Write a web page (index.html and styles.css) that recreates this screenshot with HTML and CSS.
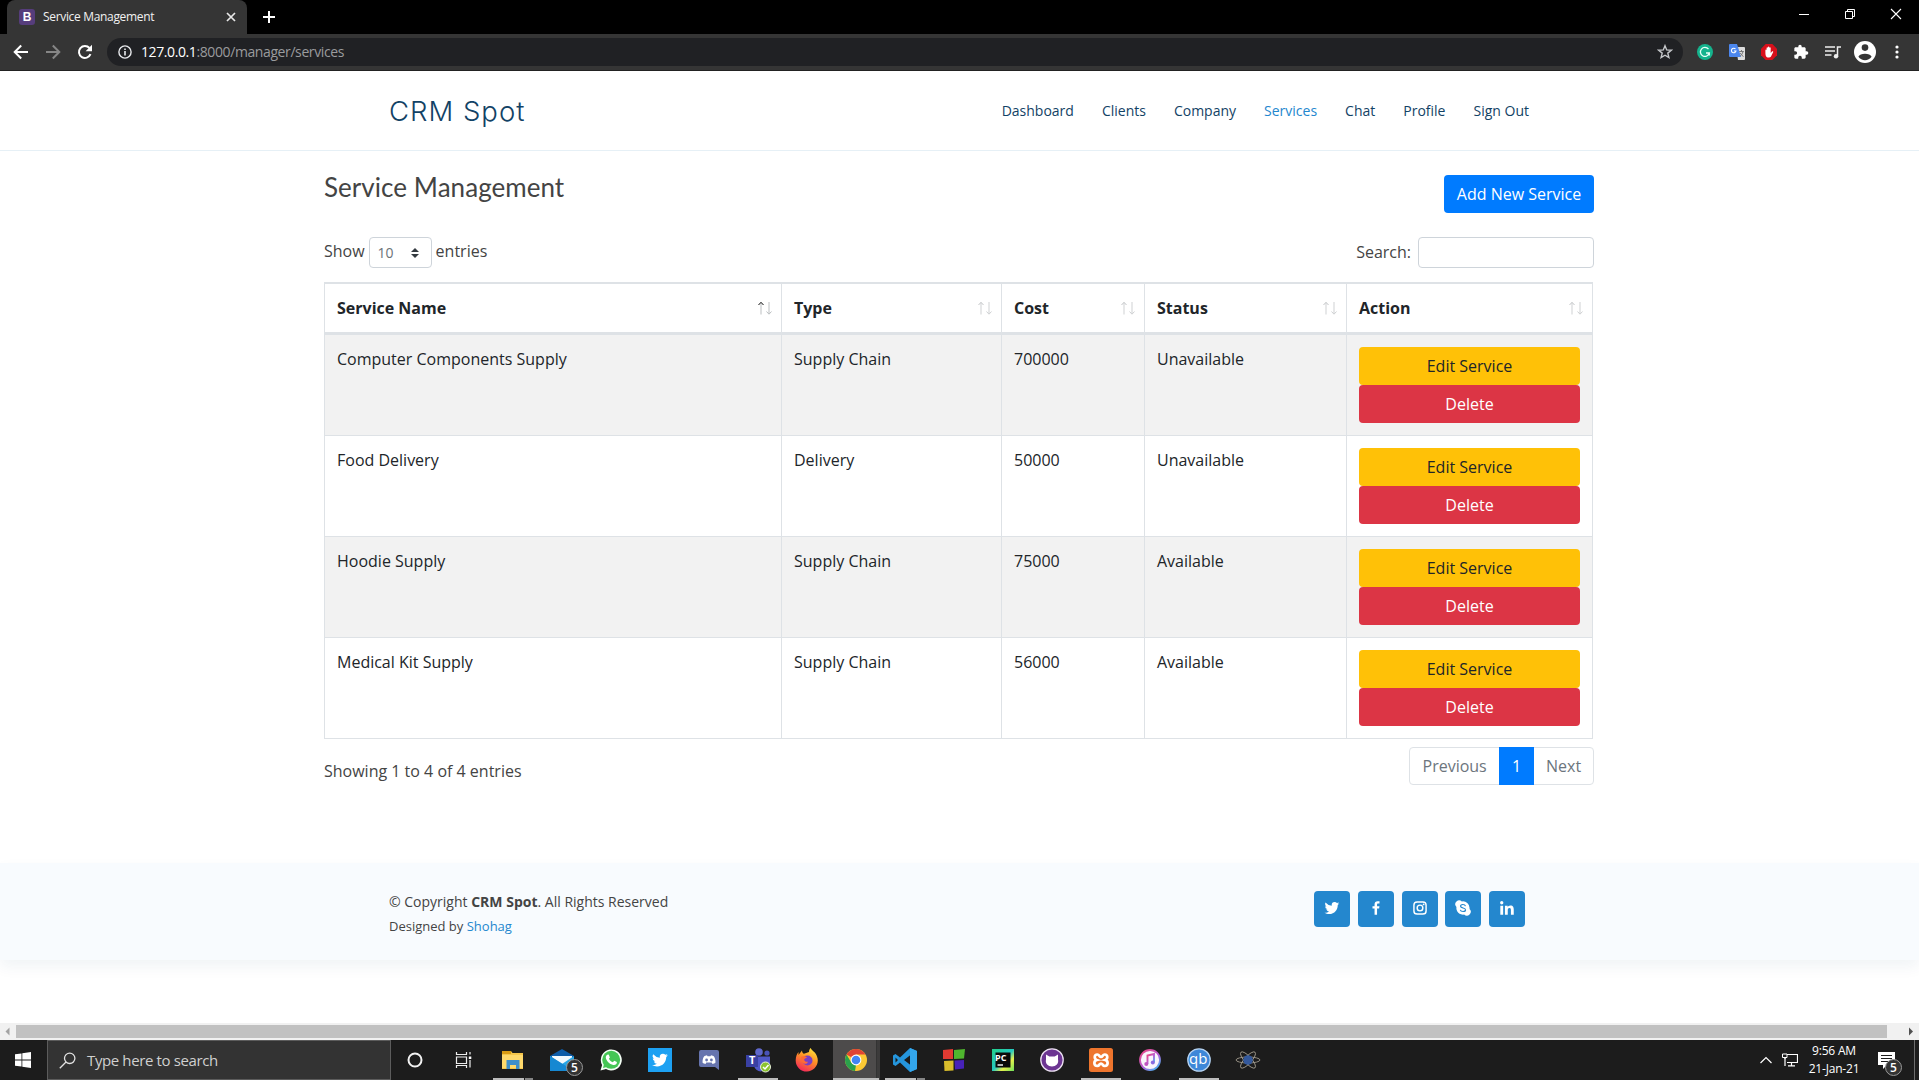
FILE: index.html
```html
<!DOCTYPE html>
<html lang="en">
<head>
<meta charset="utf-8">
<title>Service Management</title>
<link rel="stylesheet" href="styles.css">
</head>
<body>
<svg class="sprite" width="0" height="0">
  <symbol id="sort" viewBox="0 0 16 16"><path d="M4 14.500V2.500M12 2v12M9.500 11.500L12 14.200 14.500 11.500"/><path class="head" d="M1.500 5L4 2.300 6.500 5"/></symbol>
</svg>

<div class="tabstrip">
  <div class="tab">
    <span class="favicon">B</span>
    <span class="tab-title">Service Management</span>
    <svg class="tab-close" width="10" height="10" viewBox="0 0 10 10"><path d="M1 1l8 8M9 1L1 9" stroke="#e8e8e8" stroke-width="1.700"/></svg>
  </div>
  <svg class="newtab" width="14" height="14" viewBox="0 0 14 14"><path d="M7 1v12M1 7h12" stroke="#fff" stroke-width="2"/></svg>
  <div class="window-controls">
    <svg width="46" height="28" viewBox="0 0 46 28"><path d="M18 14.500h10" stroke="#fff"/></svg>
    <svg width="46" height="28" viewBox="0 0 46 28"><path d="M18.500 11.500h7v7h-7zM20.500 11.500v-2h7v7h-2" fill="none" stroke="#fff"/></svg>
    <svg width="46" height="28" viewBox="0 0 46 28"><path d="M18 9l10 10M28 9L18 19" stroke="#fff" stroke-width="1.100"/></svg>
  </div>
</div>

<div class="toolbar">
  <svg width="16" height="16" viewBox="0 0 16 16"><path d="M15 8H2M8.200 1.500L1.700 8l6.500 6.500" fill="none" stroke="#fff" stroke-width="2"/></svg>
  <svg width="16" height="16" viewBox="0 0 16 16"><path d="M1 8h13M7.800 1.500L14.300 8l-6.500 6.500" fill="none" stroke="#868686" stroke-width="2"/></svg>
  <svg width="16" height="16" viewBox="0 0 16 16"><path d="M13.500 10.200A6 6 0 1 1 12.500 4" fill="none" stroke="#fff" stroke-width="2"/><path d="M15 .800v6.400H8.600z" fill="#fff"/></svg>
  <div class="omnibox">
    <svg width="14" height="14" viewBox="0 0 14 14"><circle cx="7" cy="7" r="6.100" fill="none" stroke="#e8eaed" stroke-width="1.400"/><path d="M7 6v4.500M7 3.400v1.600" stroke="#e8eaed" stroke-width="1.600"/></svg>
    <span class="url"><b>127.0.0.1</b><i>:8000/manager/services</i></span>
    <svg class="star" width="16" height="16" viewBox="0 0 16 16"><path d="M8 1.700l1.700 4.200 4.600.300-3.500 2.900 1.100 4.500L8 11.200l-3.900 2.400 1.100-4.500L1.700 6.200l4.600-.3z" fill="none" stroke="#c6c8cb" stroke-width="1.400"/></svg>
  </div>
  <div class="extensions">
    <svg width="16" height="16" viewBox="0 0 16 16"><circle cx="8" cy="8" r="8" fill="#15b38d"/><path d="M11.500 5.200A4.500 4.500 0 1 0 12.300 9H9M12.300 9v2.500" fill="none" stroke="#e8fff8" stroke-width="1.300"/></svg>
    <svg width="16" height="16" viewBox="0 0 16 16"><path d="M7 3h8a1 1 0 0 1 1 1v11a1 1 0 0 1-1 1H9z" fill="#dcdcdc"/><path d="M1 0h7l4 13H1a1 1 0 0 1-1-1V1a1 1 0 0 1 1-1z" fill="#4c87ee"/><path d="M6.500 5A2.300 2.300 0 1 0 7 7H4.900" fill="none" stroke="#fff" stroke-width="1.100"/><path d="M10.200 7.500h4.600M12.500 6v1.500M14 7.500c-.4 2.400-2 4-3 4.700M11.200 9l3.200 3.800" fill="none" stroke="#777"/></svg>
    <svg width="16" height="16" viewBox="0 0 16 16"><path d="M4.700 0h6.600L16 4.700v6.600L11.300 16H4.700L0 11.300V4.700z" fill="#d8101b"/><path d="M4.400 6.200c0-1 1.200-1 1.200 0V4c0-1 1.300-1 1.300 0v-.7c0-1.100 1.400-1.100 1.400 0V4c0-1 1.400-1 1.400 0v5l1.300-1.500c.6-.6 1.600 0 1.100.8L10 12.500c-1 1.400-4.300 1.500-5-.3-.7-1.500-.6-4-.6-6z" fill="#fff"/></svg>
    <svg width="16" height="16" viewBox="0 0 24 24"><path d="M20.500 11H19V7c0-1.100-.9-2-2-2h-4V3.500a2.500 2.500 0 0 0-5 0V5H4c-1.100 0-2 .9-2 2v3.800h1.500a2.700 2.700 0 0 1 0 5.400H2V20c0 1.100.9 2 2 2h3.800v-1.500a2.700 2.700 0 0 1 5.400 0V22H17c1.100 0 2-.9 2-2v-4h1.500a2.500 2.500 0 0 0 0-5z" fill="#fff"/></svg>
    <svg width="16" height="16" viewBox="0 0 16 16"><path d="M0 3h10M0 7h10M0 11h6.500M12.500 12.500V3H16" fill="none" stroke="#eee" stroke-width="1.500"/><circle cx="11" cy="12.200" r="2.200" fill="#eee"/></svg>
  </div>
  <svg class="avatar" width="22" height="22" viewBox="0 0 22 22"><circle cx="11" cy="11" r="11" fill="#fff"/><circle cx="11" cy="6.600" r="3.300" fill="#353535"/><path d="M4.400 15.800c1.200-4.200 12-4.200 13.200 0-3.200 4.600-10 4.600-13.200 0z" fill="#353535"/></svg>
  <svg width="4" height="14" viewBox="0 0 4 14"><g fill="#fff"><circle cx="2" cy="2" r="1.600"/><circle cx="2" cy="7" r="1.600"/><circle cx="2" cy="12" r="1.600"/></g></svg>
</div>

<header class="site-header">
  <div class="brand">CRM Spot</div>
  <nav class="nav">
    <a>Dashboard</a><a>Clients</a><a>Company</a><a class="active">Services</a><a>Chat</a><a>Profile</a><a>Sign Out</a>
  </nav>
</header>

<main class="content">
  <div class="title-row">
    <h4>Service Management</h4>
    <a class="btn btn-primary">Add New Service</a>
  </div>
  <div class="filter-row">
    <div class="length">Show <span class="select">10 <svg width="8" height="10" viewBox="0 0 4 5"><path d="M2 0L0 2h4zm0 5L0 3h4z" fill="#343a40"/></svg></span> entries</div>
    <div class="search">Search:<span class="input"></span></div>
  </div>
  <table class="services">
    <colgroup><col class="c-name"><col class="c-type"><col class="c-cost"><col class="c-status"><col class="c-action"></colgroup>
    <thead>
      <tr>
        <th><div class="th">Service Name<svg class="sort asc"><use href="#sort"/></svg></div></th>
        <th><div class="th">Type<svg class="sort"><use href="#sort"/></svg></div></th>
        <th><div class="th">Cost<svg class="sort"><use href="#sort"/></svg></div></th>
        <th><div class="th">Status<svg class="sort"><use href="#sort"/></svg></div></th>
        <th><div class="th">Action<svg class="sort"><use href="#sort"/></svg></div></th>
      </tr>
    </thead>
    <tbody>
      <tr><td>Computer Components Supply</td><td>Supply Chain</td><td>700000</td><td>Unavailable</td><td><a class="btn btn-warning">Edit Service</a><a class="btn btn-danger">Delete</a></td></tr>
      <tr><td>Food Delivery</td><td>Delivery</td><td>50000</td><td>Unavailable</td><td><a class="btn btn-warning">Edit Service</a><a class="btn btn-danger">Delete</a></td></tr>
      <tr><td>Hoodie Supply</td><td>Supply Chain</td><td>75000</td><td>Available</td><td><a class="btn btn-warning">Edit Service</a><a class="btn btn-danger">Delete</a></td></tr>
      <tr><td>Medical Kit Supply</td><td>Supply Chain</td><td>56000</td><td>Available</td><td><a class="btn btn-warning">Edit Service</a><a class="btn btn-danger">Delete</a></td></tr>
    </tbody>
  </table>
  <div class="table-foot">
    <div class="info">Showing 1 to 4 of 4 entries</div>
    <div class="pagination"><span class="prev">Previous</span><span class="current">1</span><span class="next">Next</span></div>
  </div>
</main>

<footer class="site-footer">
  <div class="legal">
    <div class="copyright">© Copyright <strong>CRM Spot</strong>. All Rights Reserved</div>
    <div class="credits">Designed by <a>Shohag</a></div>
  </div>
  <div class="social">
    <a><svg width="18" height="18" viewBox="0 0 24 24"><path d="M19.630 7.997c.013.175.013.349.013.523 0 5.325-4.053 11.461-11.460 11.461-2.282 0-4.402-.661-6.186-1.809.324.037.636.050.973.050 1.883 0 3.616-.636 5.001-1.721a4.036 4.036 0 0 1-3.767-2.793c.249.037.499.062.761.062.361 0 .724-.050 1.061-.137a4.027 4.027 0 0 1-3.230-3.953v-.050c.537.299 1.160.486 1.820.511a4.022 4.022 0 0 1-1.796-3.354c0-.748.199-1.434.548-2.032a11.457 11.457 0 0 0 8.306 4.215c-.062-.300-.100-.611-.100-.923a4.026 4.026 0 0 1 4.028-4.028c1.160 0 2.207.486 2.943 1.272a7.957 7.957 0 0 0 2.556-.973 4.020 4.020 0 0 1-1.771 2.220 8.073 8.073 0 0 0 2.319-.624 8.645 8.645 0 0 1-2.019 2.083z"/></svg></a>
    <a><svg width="18" height="18" viewBox="0 0 24 24"><path d="M13.397 20.997v-8.196h2.765l.411-3.209h-3.176V7.548c0-.926.258-1.560 1.587-1.560h1.684V3.127A22.336 22.336 0 0 0 14.201 3c-2.444 0-4.122 1.492-4.122 4.231v2.355H7.332v3.209h2.753v8.202z"/></svg></a>
    <a><svg width="18" height="18" viewBox="0 0 24 24"><rect x="3.900" y="3.900" width="16.200" height="16.200" rx="4.200" fill="none" stroke="#fff" stroke-width="1.900"/><circle cx="12" cy="12" r="3.800" fill="none" stroke="#fff" stroke-width="1.900"/><circle cx="16.800" cy="7.200" r="1.200"/></svg></a>
    <a><svg width="18" height="18" viewBox="0 0 24 24"><path d="M20.700 13.400c.1-.5.100-.9.100-1.400A8.800 8.800 0 0 0 10.500 3.300 5 5 0 0 0 3.300 10.500 8.800 8.800 0 0 0 13.500 20.700a5 5 0 0 0 7.200-7.300z"/><path d="M15.300 9.400c-.8-2.800-6.700-2.700-6.600.1.100 3.200 6.800 1.900 6.700 5-.1 2.900-6.300 3-7-.1" fill="none" stroke="#2487ce" stroke-width="1.500"/></svg></a>
    <a><svg width="18" height="18" viewBox="0 0 24 24"><circle cx="4.983" cy="5.009" r="2.188"/><path d="M9.237 8.855v12.139h3.769v-6.003c0-1.584.298-3.118 2.262-3.118 1.937 0 1.961 1.811 1.961 3.218v5.904H21v-6.657c0-3.270-.704-5.783-4.526-5.783-1.835 0-3.065 1.007-3.568 1.960h-.051v-1.660zm-6.142 0H6.870v12.139H3.095z"/></svg></a>
  </div>
</footer>

<div class="hscroll">
  <svg width="16" height="17" viewBox="0 0 16 17"><path d="M9.500 4.500v8l-4-4z" fill="#a3a3a3"/></svg>
  <div class="thumb"></div>
  <svg width="32" height="17" viewBox="0 0 32 17"><path d="M22 4.500v8l4-4z" fill="#505050"/></svg>
</div>

<div class="taskbar">
  <div class="start"><svg width="16" height="16" viewBox="0 0 16 16"><path d="M0 2.300L6.500 1.400V7.600H0zM7.300 1.300L16 0v7.600H7.300zM0 8.400h6.500v6.200L0 13.700zM7.300 8.400H16V16l-8.700-1.300z" fill="#fff"/></svg></div>
  <div class="searchbox"><svg width="17" height="17" viewBox="0 0 17 17"><circle cx="10.700" cy="6.300" r="5.200" fill="none" stroke="#e2e2e2" stroke-width="1.300"/><path d="M7 10L.8 16.200" stroke="#e2e2e2" stroke-width="1.300"/></svg><span>Type here to search</span></div>
  <div class="apps">
    <div class="app"><svg width="24" height="24" viewBox="0 0 24 24"><circle cx="12" cy="12" r="6.500" fill="none" stroke="#f2f2f2" stroke-width="2"/></svg></div>
    <div class="app"><svg width="24" height="24" viewBox="0 0 24 24"><path d="M4.500 4v2.500h10V4M4.500 9h10v6.500h-10zM4.500 20v-2.500h10V20M18 4v2.500M18 12v7.500" fill="none" stroke="#eee" stroke-width="1.200"/><path d="M16.800 8.500h2.500V11h-2.500z" fill="#fff"/></svg></div>
    <div class="app grouped"><svg width="24" height="24" viewBox="0 0 24 24"><path d="M1 3h9l1.500 2H22v16H1z" fill="#f5c64b"/><path d="M1 3h9v3H1z" fill="#d99b14"/><path d="M1 7h21v13H1z" fill="#ffd96c"/><path d="M5.500 12h13v9h-3.500v-4h-6v4H5.500z" fill="#3f8fca"/></svg></div>
    <div class="app"><svg width="26" height="24" viewBox="0 0 26 24"><path d="M1 8L13 1l12 7v5H1z" fill="#0e5ca8"/><path d="M3 8h20v8H3z" fill="#f3f9fd"/><path d="M1 8l12 8 12-8v15H1z" fill="#28a5e5"/><path d="M1 8l24 15H1z" fill="#1688d2"/></svg><span class="badge">5</span></div>
    <div class="app"><svg width="24" height="24" viewBox="0 0 24 24"><path d="M1.500 22.500l1.600-5.500A10.500 10.500 0 1 1 7 21z" fill="#f5fff6"/><circle cx="12.200" cy="11.800" r="9" fill="#45c655"/><path d="M4 20l1-4 3 3z" fill="#45c655"/><path d="M8.200 6.800l1.500-.2 1.200 2.800-1 1.300c1 1.800 2.200 2.800 4 3.600l1.300-1.500 2.700 1.300c.2 2-1.600 3.200-3.600 2.900-4-.9-6.900-4.200-7.500-7.300-.1-1.200.6-2.300 1.400-2.900z" fill="#fff"/></svg></div>
    <div class="app"><svg width="24" height="24" viewBox="0 0 24 24"><path d="M0 0h24v24H0z" fill="#1da1f2"/><path transform="translate(2.500 2.500) scale(.8)" fill="#fff" d="M19.630 7.997c.013.175.013.349.013.523 0 5.325-4.053 11.461-11.460 11.461-2.282 0-4.402-.661-6.186-1.809 2.200.2 4.300-.3 5.974-1.671a4.036 4.036 0 0 1-3.767-2.793c.6.100 1.200.050 1.822-.075a4.027 4.027 0 0 1-3.230-4.003c.537.299 1.160.486 1.820.511a4.022 4.022 0 0 1-1.248-5.386 11.457 11.457 0 0 0 8.306 4.215c-.7-2.900 1.400-4.951 3.928-4.951 1.160 0 2.207.486 2.943 1.272a7.957 7.957 0 0 0 2.556-.973 4.020 4.020 0 0 1-1.771 2.220 8.073 8.073 0 0 0 2.319-.624 8.645 8.645 0 0 1-2.019 2.083z"/></svg></div>
    <div class="app"><svg width="24" height="24" viewBox="0 0 24 24"><path d="M4 2h16a2 2 0 0 1 2 2v18l-4-3H4a2 2 0 0 1-2-2V4a2 2 0 0 1 2-2z" fill="#6674ae"/><path d="M5.500 14.500c0-3 .8-5.500 2-6.500l2.500-.8.500 1h3l.5-1 2.500.8c1.200 1 2 3.500 2 6.500-1 1-2 1.400-3 1.400l-.8-1.400H9.300l-.8 1.400c-1 0-2-.4-3-1.400z" fill="#fff"/><circle cx="9.600" cy="12" r="1.400" fill="#6674ae"/><circle cx="14.400" cy="12" r="1.400" fill="#6674ae"/></svg></div>
    <div class="app open"><svg width="26" height="26" viewBox="0 0 26 26"><circle cx="14" cy="5" r="3.800" fill="#6068cc"/><circle cx="22" cy="6" r="2.600" fill="#4953b8"/><path d="M9 9.500h16v7a5 5 0 0 1-5 5l-4 3a7 7 0 0 1-7-6z" fill="#5059c9"/><path d="M1 8h12v12H1z" fill="#3940a3"/><circle cx="20.500" cy="20" r="5" fill="#8cc32f" stroke="#e9f3dc"/><path d="M18 20l2 2 3.500-4" fill="none" stroke="#fff" stroke-width="1.500"/></svg><b class="teams">T</b></div>
    <div class="app"><svg width="24" height="24" viewBox="0 0 24 24"><defs><linearGradient id="ff" x1=".8" y1="0" x2=".3" y2="1"><stop offset="0" stop-color="#ffe83d"/><stop offset=".45" stop-color="#ff9226"/><stop offset="1" stop-color="#f3265a"/></linearGradient></defs><path d="M14 4c0-2 1-3.500 1.700-4 1 3 5.300 4 6.300 8.500C25 16 19 23.500 12 23.500S.5 18 .7 12C.8 8.500 2 5.500 3.500 4v3L7 2.500c0 2 1 3 2 3.200z" fill="url(#ff)"/><circle cx="12.500" cy="12.500" r="5" fill="#7a3fc4"/><path d="M6 9c2-1.500 5-.5 6 .2-1 1.300-3 1-2.700 3 .3 1 1.500 2 3.700 1.500-2 4.500-8 1.500-7-4.700z" fill="#ff6a35"/></svg></div>
    <div class="app focused"><svg width="24" height="24" viewBox="0 0 24 24"><circle cx="12" cy="12" r="11" fill="#fcc934"/><path d="M12 12L2.500 6.500A11 11 0 0 1 21.500 6.500H12z" fill="#e04434"/><path d="M2.500 6.500l5 8.500 4.500 2-1 6A11 11 0 0 1 2.500 6.500z" fill="#2aa14c"/><circle cx="12" cy="12" r="5.400" fill="#fff"/><circle cx="12" cy="12" r="4.300" fill="#4285f4"/></svg></div>
    <div class="app grouped"><svg width="24" height="24" viewBox="0 0 24 24"><path d="M17 0l7 3v18l-7 3L7 14.500 2.500 18 0 16.500V7.500L2.500 6 7 9.500zM17.500 7L11 12l6.500 5zM2.500 9.500v5L5 12z" fill="#2596dd" fill-rule="evenodd"/><path d="M17 0l7 3v18l-7 3z" fill="#33a7ee"/></svg></div>
    <div class="app"><svg width="24" height="24" viewBox="0 0 24 24"><path d="M1 2l10-1v10H1z" fill="#e03a32"/><path d="M12 2l11-1-1 9.500-10 .5z" fill="#4fb62e"/><path d="M2 13l9.500-.5v10L2.500 23z" fill="#d9bd2c"/><path d="M12.500 12.500L22 12v8.500l-9 1z" fill="#4722b8"/></svg></div>
    <div class="app"><svg width="22" height="22" viewBox="0 0 22 22"><defs><linearGradient id="pc" x2="1" y2="1"><stop offset="0" stop-color="#22d08a"/><stop offset=".5" stop-color="#27c8c0"/><stop offset=".7" stop-color="#e8f04c"/><stop offset="1" stop-color="#6de05a"/></linearGradient></defs><path d="M0 0h22v22H0z" fill="url(#pc)"/><path d="M3.500 3.500h15v15h-15z" fill="#0a0a0a"/><path d="M5.500 16h5.500" stroke="#fff" stroke-width="1.400"/></svg><b class="pycharm">PC</b></div>
    <div class="app"><svg width="24" height="24" viewBox="0 0 24 24"><circle cx="12" cy="12" r="11.200" fill="#6c3592" stroke="#eadff0" stroke-width="1.300"/><path d="M6 6.500l3.300 2h5.400l3.300-2v5c1 4-2 7-6 7s-7-3-6-7z" fill="#fff"/></svg></div>
    <div class="app open"><svg width="24" height="24" viewBox="0 0 24 24"><rect width="24" height="24" rx="2.500" fill="#ee752d"/><path d="M8.300 6.500c-3.300 0-3.300 4.600-.6 5.500-3.200.8-3.200 6 .6 6 2.200 0 2-2.500 3.700-2.500s1.500 2.500 3.700 2.500c3.800 0 3.800-5.200.6-6 2.700-.9 2.700-5.500-.6-5.500-2.200 0-2 2.500-3.700 2.500s-1.500-2.500-3.700-2.500z" fill="none" stroke="#fff" stroke-width="2.700"/></svg></div>
    <div class="app"><svg width="24" height="24" viewBox="0 0 24 24"><defs><linearGradient id="it" x2=".8" y2="1"><stop offset="0" stop-color="#f0457c"/><stop offset=".6" stop-color="#b45fd8"/><stop offset="1" stop-color="#4bb4f0"/></linearGradient></defs><circle cx="12" cy="12" r="10" fill="#f8f5fb" stroke="url(#it)" stroke-width="1.800"/><path d="M9.500 16V7.500l6.500-1.500v8.500" fill="none" stroke="url(#it)" stroke-width="1.900"/><circle cx="8.300" cy="16" r="2" fill="#c054c0"/><circle cx="14.800" cy="14.600" r="2" fill="#8a6be0"/></svg></div>
    <div class="app open"><svg width="24" height="24" viewBox="0 0 24 24"><circle cx="12" cy="12" r="11.200" fill="#3d87d8" stroke="#b5d2f0" stroke-width="1.300"/></svg><b class="qb">qb</b></div>
    <div class="app"><svg width="26" height="24" viewBox="0 0 26 24"><g fill="none" stroke="#a09a8c" stroke-width=".9"><ellipse cx="13" cy="12" rx="12" ry="3"/><ellipse cx="13" cy="12" rx="10.500" ry="3.500" transform="rotate(48 13 12)"/><ellipse cx="13" cy="12" rx="10.500" ry="3.500" transform="rotate(-48 13 12)"/></g><circle cx="13" cy="12" r="4.800" fill="#34599c"/></svg></div>
  </div>
  <div class="tray">
    <svg width="12" height="8" viewBox="0 0 12 8"><path d="M.5 7L6 1.500 11.500 7" fill="none" stroke="#fff" stroke-width="1.200"/></svg>
    <svg class="net" width="16" height="14" viewBox="0 0 16 14"><path d="M5 1.500h10.500v8H5M3 5v8M9.500 9.500v3M6 12.900h7M2 5h2" fill="none" stroke="#fff" stroke-width="1.200"/><path d="M.5 1h4.500v3.500H.5z" fill="none" stroke="#fff"/></svg>
    <div class="clock"><span>9:56 AM</span><span>21-Jan-21</span></div>
    <div class="action-center"><svg width="17" height="17" viewBox="0 0 17 17"><path d="M0 0h17v13H9l-4 4v-4H0z" fill="#fff"/><path d="M3 3.500h11M3 6.500h11M3 9.500h7" stroke="#1c1c1c"/></svg><span class="badge">5</span></div>
    <div class="peek"></div>
  </div>
</div>
</body>
</html>
```
FILE: styles.css
```css
* { box-sizing: border-box; }
body {
  margin: 0;
  width: 1919px;
  height: 1080px;
  overflow: hidden;
  display: flex;
  flex-direction: column;
  background: #fff;
  color: #444;
  font: 16px/24px "Open Sans", sans-serif;
}
svg { flex: none; display: block; }
.sprite { position: absolute; }

/* browser chrome */
.tabstrip { height: 34px; background: #000; display: flex; align-items: center; padding-left: 7px; flex: none; }
.tab {
  width: 240px; height: 34px; background: #353535; border-radius: 8px 8px 0 0;
  display: flex; align-items: center; padding: 0 11px 0 12px; color: #f1f1f1;
}
.favicon {
  width: 16px; height: 16px; border-radius: 3px; background: #563d7c; color: #fff;
  font: bold 12px/16px "Liberation Sans", sans-serif; text-align: center; margin-right: 8px;
}
.tab-title { font-size: 12px; letter-spacing: -.33px; flex: 1; white-space: nowrap; }
.newtab { margin-left: 15px; }
.window-controls { display: flex; margin-left: auto; align-self: flex-start; }
.toolbar {
  height: 37px; background: #353535; border-bottom: 1px solid #222; flex: none;
  display: flex; align-items: center; gap: 16px; padding: 0 20px 0 13px;
}
.omnibox {
  flex: 1; height: 28px; border-radius: 14px; background: #202124; margin: 0 -2px;
  display: flex; align-items: center; padding: 0 10px 0 11px;
}
.url { font-size: 14px; margin-left: 9px; flex: 1; color: #9a9b9d; letter-spacing: -.4px; }
.url b { font-weight: 400; color: #fff; }
.url i { font-style: normal; }
.extensions { display: flex; gap: 16px; }
.avatar { margin-left: -3px; margin-right: 3px; }

/* site header */
.site-header {
  height: 80px; border-bottom: 1px solid #e6f0f6; flex: none; padding: 0 390px 0 389px;
  display: flex; justify-content: space-between; align-items: center;
}
.brand { font: 300 27.5px/40px Inter, sans-serif; letter-spacing: 1px; color: #124265; }
.nav { display: flex; gap: 28px; font-size: 14px; color: #124265; }
.nav a.active { color: #2487ce; }

/* content */
.content { width: 1270px; margin: 24px 0 0 324px; flex: none; height: 688px; }
.title-row { display: flex; justify-content: space-between; height: 62px; }
h4 { margin: -2px 0 0; font: 400 26px/29px Lato, sans-serif; letter-spacing: .05px; color: #444; }
.btn {
  display: block; height: 38px; padding: 7px 12px; border-radius: 4px;
  text-align: center; color: #fff;
}
.btn-primary { background: #007bff; width: 150px; padding: 7px 0; }
.btn-warning { background: #ffc107; color: #212529; }
.btn-danger { background: #dc3545; }
.filter-row { display: flex; justify-content: space-between; height: 45px; }
.length { display: flex; height: 31px; line-height: 28px; gap: 4px; }
.select {
  width: 63px; height: 31px; border: 1px solid #ced4da; border-radius: 4px; color: #6b7278;
  font-size: 14px; line-height: 30px; display: flex; align-items: center;
  justify-content: space-between; padding: 0 12px 0 8px;
}
.search { display: flex; line-height: 30px; gap: 7px; }
.input { width: 176px; height: 31px; border: 1px solid #ced4da; border-radius: 4px; }

.services {
  width: 1269px; table-layout: fixed; border-collapse: separate; border-spacing: 0;
  border-left: 1px solid #dee2e6; color: #212529;
}
.c-name { width: 457px; } .c-type { width: 220px; } .c-cost { width: 143px; }
.c-status { width: 202px; } .c-action { width: 246px; }
th, td { padding: 12px; text-align: left; vertical-align: top; border-right: 1px solid #dee2e6; }
th { border-top: 2px solid #dee2e6; border-bottom: 3px solid #dee2e6; font-weight: 700; }
td { border-bottom: 1px solid #dee2e6; }
tbody tr:nth-child(odd) { background: #f2f2f2; }
.th { display: flex; justify-content: space-between; align-items: center; height: 24px; margin-right: -4px; }
.sort { width: 16px; height: 16px; fill: none; stroke: #cfd1d3; --head: #c4c6c8; }
.sort.asc { --head: #111; stroke: #bcbfc1; }
.head { stroke: var(--head); }
.table-foot { display: flex; justify-content: space-between; padding-top: 8px; }
.info { padding-top: 12px; }
.pagination {
  display: flex; height: 38px; line-height: 36px; border: 1px solid #dee2e6;
  border-radius: 4px; color: #6c757d;
}
.prev { width: 89px; padding-left: 12.5px; }
.current { width: 35px; margin: -1px 0; line-height: 38px; text-align: center; background: #007bff; color: #fff; }
.next { width: 59px; padding-left: 12px; }

/* footer */
.site-footer {
  height: 97px; background: #f8fbfe; box-shadow: 0 7px 14px rgba(18, 66, 101, .06); flex: none;
  padding: 28px 394px 0 389px; display: flex; justify-content: space-between;
}
.copyright { font-size: 14px; line-height: 22px; }
.credits { font-size: 13px; line-height: 20px; padding-top: 3px; }
.credits a { color: #2487ce; }
.social { display: flex; gap: 7.7px; }
.social a { width: 36px; height: 36px; border-radius: 4px; background: #2487ce; padding: 8px 9px; fill: #fff; }

/* scrollbar and taskbar */
.hscroll { height: 17px; background: #f1f1f1; display: flex; margin-top: auto; flex: none; }
.thumb { flex: 1; margin: 2px 0; background: #c1c1c1; }
.taskbar { height: 40px; background: #1c1c1c; display: flex; flex: none; color: #fff; }
.start { width: 47px; display: flex; align-items: center; justify-content: center; padding-right: 1px; }
.searchbox {
  width: 344px; background: #333; border: 1px solid #5c5c5c; display: flex; align-items: center;
  gap: 11px; padding-left: 11px; font-size: 15px; color: #d0d0d0; letter-spacing: -.4px;
}
.searchbox span { letter-spacing: -.38px; }
.apps { display: flex; margin-left: -1px; }
.app { width: 49px; height: 40px; display: flex; align-items: center; justify-content: center; position: relative; }
.app.open { background: linear-gradient(#bdbdbd, #bdbdbd) 5px 38px / 40px 2px no-repeat; }
.app.grouped { background: linear-gradient(90deg, #bdbdbd 31px, #1c1c1c 31px, #1c1c1c 32px, #858585 32px) 5px 38px / 40px 2px no-repeat; }
.app.focused { background: linear-gradient(#bdbdbd, #bdbdbd) 2px 38px / 46px 2px no-repeat, linear-gradient(90deg, #1c1c1c 2px, #4d4b4b 2px, #4d4b4b 45px, #333 45px, #333 46px, #3c3b3b 46px); }
.badge {
  position: absolute; left: 29px; top: 19px; width: 17px; height: 17px; border-radius: 50%;
  background: #333; border: 1px solid #999; font-size: 12px; font-weight: 600; line-height: 15px; text-align: center;
}
.teams { position: absolute; left: 16px; top: 8px; font-size: 11px; }
.pycharm { position: absolute; left: 17px; top: 10px; font-size: 9px; line-height: 15px; }
.qb { position: absolute; left: 15px; top: 6px; font-size: 15px; font-weight: 400; }
.tray { margin-left: auto; display: flex; align-items: center; }
.net { margin-left: 10px; }
.clock {
  width: 52px; margin: 0 18px 0 10px; display: flex; flex-direction: column; align-items: center;
  font-size: 12px; line-height: 18px; letter-spacing: -.2px; white-space: nowrap;
}
.action-center { position: relative; margin-right: 19px; }
.action-center .badge { left: 7px; top: 7px; }
.peek { width: 5px; height: 40px; border-left: 1px solid #6d6d6d; }
```
